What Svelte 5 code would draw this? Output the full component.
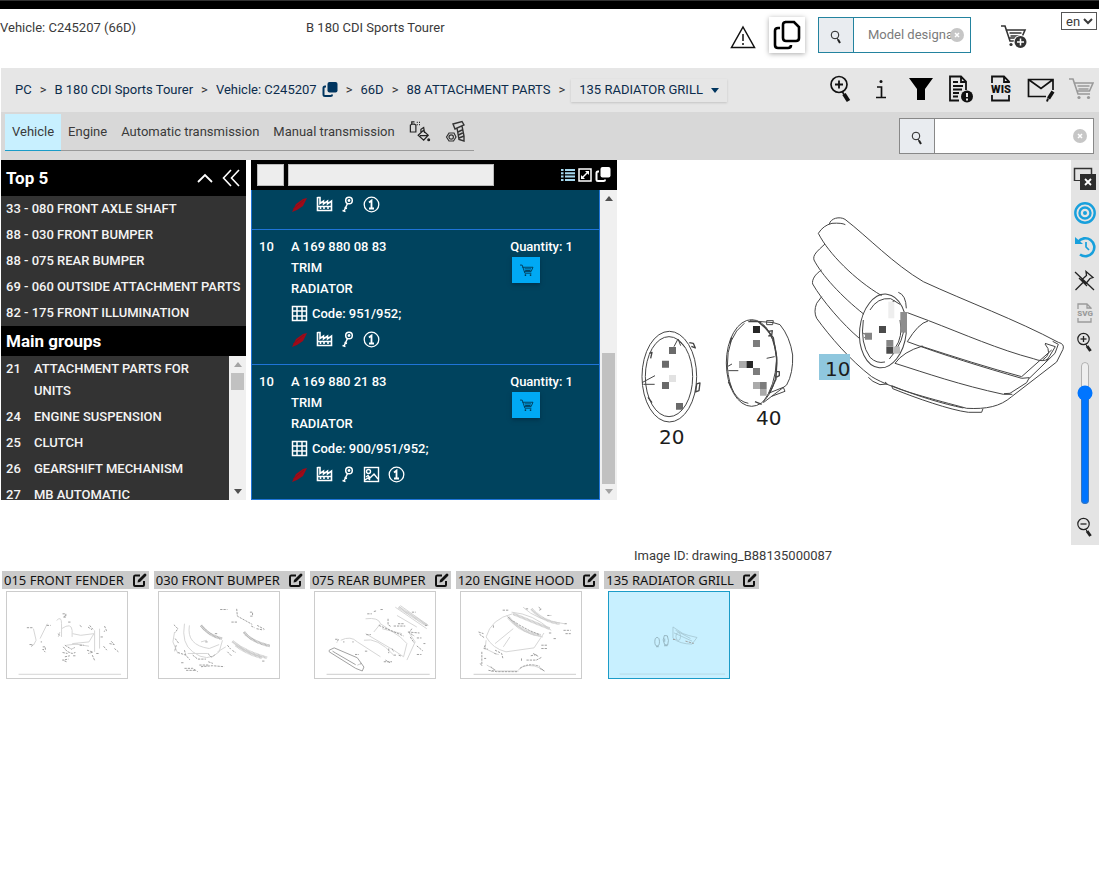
<script>
  let zoomLevel = $state(81);
  let activeTab = $state('Vehicle');
  let language = $state('en');
  let activeThumb = $state('135');

  const crumbsBefore = ['PC', 'B 180 CDI Sports Tourer', 'Vehicle: C245207'];
  const crumbsAfter = ['66D', '88 ATTACHMENT PARTS'];
  const tabs = ['Vehicle', 'Engine', 'Automatic transmission', 'Manual transmission'];
  const navTools = [
    ['zoom', 'Zoom in'],
    ['info', 'Information'],
    ['filter', 'Filter'],
    ['docAlert', 'Document notes'],
    ['wis', 'WIS'],
    ['mail', 'Send message'],
    ['cart', 'Shopping cart']
  ];
  const topFive = [
    '33 - 080 FRONT AXLE SHAFT',
    '88 - 030 FRONT BUMPER',
    '88 - 075 REAR BUMPER',
    '69 - 060 OUTSIDE ATTACHMENT PARTS',
    '82 - 175 FRONT ILLUMINATION'
  ];
  const mainGroups = [
    ['21', 'ATTACHMENT PARTS FOR UNITS'],
    ['24', 'ENGINE SUSPENSION'],
    ['25', 'CLUTCH'],
    ['26', 'GEARSHIFT MECHANISM'],
    ['27', 'MB AUTOMATIC']
  ];
  const parts = [
    { pos: '10', number: 'A 169 880 08 83', code: '951/952;', image: false },
    { pos: '10', number: 'A 169 880 21 83', code: '900/951/952;', image: true }
  ];
  const sideTools = [
    ['closeWindow', 'Close window'],
    ['target', 'Hotspots'],
    ['history', 'History'],
    ['unpin', 'Unpin'],
    ['svg', 'SVG'],
    ['zoomSmall', 'Zoom in']
  ];
  const thumbs = [
    { id: '015', name: 'FRONT FENDER', box: '20 79 363 260' },
    { id: '030', name: 'FRONT BUMPER', box: '473 79 363 260' },
    { id: '075', name: 'REAR BUMPER', box: '37 79 363 260' },
    { id: '120', name: 'ENGINE HOOD', box: '472 79 363 260' },
    { id: '135', name: 'RADIATOR GRILL', box: '313 154 364 260' }
  ];
</script>

{#snippet magnifier()}
  <svg width="12" height="14" viewBox="0 0 12 14" fill="none" stroke="#222">
    <circle cx="5" cy="5" r="3.8" /><path d="M7 8l1 2" /><path d="M8 9.5l2 3.5" stroke-width="2" />
  </svg>
{/snippet}

{#snippet clearMark()}
  <svg width="14" height="14" viewBox="0 0 14 14">
    <circle cx="7" cy="7" r="7" fill="#c6c6c6" /><path d="M5 5l4 4M9 5l-4 4" stroke="#fff" stroke-width="1.5" />
  </svg>
{/snippet}

{#snippet cartShape()}
  <path d="M1 2h4l5 15h12M5.500 6H25l-3.500 8H9M9.500 9h12M10.500 12h10" fill="none" stroke="currentColor" stroke-width="1.600" />
  <circle cx="11" cy="20.500" r="1.600" fill="currentColor" /><circle cx="20.500" cy="20.500" r="1.600" fill="currentColor" />
{/snippet}

{#snippet copyFilled()}
  <svg width="16" height="16" viewBox="0 0 16 16">
    <rect x="5.500" y="0" width="10" height="10.500" rx="2" fill="currentColor" />
    <path d="M4 4.500H3Q1.500 4.500 1.500 6V12.500Q1.500 14 3 14H8.500Q10 14 10 12.500" fill="none" stroke="currentColor" stroke-width="2" />
  </svg>
{/snippet}

{#snippet icon(name)}
  {#if name === 'zoom'}
    <svg width="24" height="28" viewBox="0 0 24 28" fill="none" stroke="#111">
      <circle cx="10" cy="9.500" r="8" stroke-width="1.700" /><path d="M6 9.500h8M10 5.500v8" stroke-width="1.800" />
      <path d="M13.500 17l1.500 2.500" stroke-width="1.500" /><path d="M15 19l4.500 7" stroke-width="4" />
    </svg>
  {:else if name === 'info'}
    <svg width="16" height="24" viewBox="0 0 16 24" fill="none" stroke="#111" stroke-width="1.700">
      <circle cx="8" cy="4.500" r="1.500" fill="#111" stroke="none" /><path d="M4 10h4.500v10M3 20.500h10" />
    </svg>
  {:else if name === 'filter'}
    <svg width="26" height="24" viewBox="0 0 26 24"><path d="M1 1h24l-8 11v11H9V12Z" fill="#000" /></svg>
  {:else if name === 'docAlert'}
    <svg width="26" height="28" viewBox="0 0 26 28" fill="none" stroke="#111" stroke-width="1.800">
      <path d="M11 25.500H2V1.500H13l5 5V15M13 1.500V7h5M5 7h5M5 11h10M5 14.500h9M5 18h6M5 21.500h5" />
      <circle cx="19" cy="21.500" r="6" fill="#111" stroke="none" /><path d="M19 18v4M19 23.500v2" stroke="#fff" />
    </svg>
  {:else if name === 'wis'}
    <svg width="22" height="28" viewBox="0 0 22 28" fill="none" stroke="#111" stroke-width="1.800">
      <path d="M2 8V1.500H14l5 5V8M14 1.500V7h5M2 20v5.500H19V20" />
      <text class="glyph wis" x="11" y="17.500">WIS</text>
    </svg>
  {:else if name === 'mail'}
    <svg width="28" height="26" viewBox="0 0 28 26" fill="none" stroke="#111" stroke-width="1.700">
      <path d="M19 20.500H1.500V3.500H26V14M1.500 3.500l12.500 9L26 3.500" />
      <path d="M21.500 22.500l4.500-7" stroke-width="3.500" /><path d="M20 25.500l1-3" stroke-width="2" />
    </svg>
  {:else if name === 'cart'}
    <svg class="faded" width="26" height="24" viewBox="0 0 26 24">{@render cartShape()}</svg>
  {:else if name === 'spray'}
    <svg width="22" height="24" viewBox="0 0 24 24" fill="none" stroke="#222" stroke-width="1.300">
      <path d="M1.500 4.500l1.500-1h3l1.500 1V12h-6ZM3 3V1h3M8.500 1.500h1M11 1.500h1M8.500 4h1M11 4h1" />
      <path d="M10 15.500l5.500-5 5.500 5-5 5.500ZM13 13V9l3-2 1 6M12 16h8" /><circle cx="21.500" cy="20.500" r="1" fill="#222" />
    </svg>
  {:else if name === 'bolt'}
    <svg width="22" height="24" viewBox="0 0 22 24" fill="none" stroke="#333" stroke-width="1.200">
      <path d="M1.500 17l2.500-4h5l2 4-2.500 4H4Z" /><circle cx="6.200" cy="17" r="2.200" />
      <path d="M8 4l9-2.500 2 3.500-9 4ZM12 8l2 11.500 5 1.500V16L17 6M13 12l4-2M13.500 15l4-2M14 18l5-2" stroke-width="1.400" />
    </svg>
  {:else if name === 'feather'}
    <svg width="17" height="17" viewBox="0 0 17 17"><path d="M1 16L5 8L12 3L16 2L12 10L6 14Z" fill="#a00a18" /><path d="M2 13L13 4" stroke="#83101c" /></svg>
  {:else if name === 'factory'}
    <svg width="17" height="17" viewBox="0 0 17 17" fill="none" stroke="#fff" stroke-width="1.600">
      <path d="M1.500 1v13.500h14V5l-4 3V5L7.500 8V5L4 7.500V1.500H1.500M2 10.500h13M4.500 11v2M8 11v2M12 11v2" />
    </svg>
  {:else if name === 'key'}
    <svg width="14" height="17" viewBox="0 0 14 17" fill="none" stroke="#fff" stroke-width="1.500">
      <circle cx="8" cy="4.500" r="3.300" /><circle cx="8" cy="4.500" r=".7" /><path d="M6.500 7.500L3 15M1.500 14.500l3 1M3.500 11.500l2.500 1" />
    </svg>
  {:else if name === 'picture'}
    <svg width="17" height="17" viewBox="0 0 17 17" fill="none" stroke="#fff" stroke-width="1.400">
      <rect x="1.500" y="1.500" width="14" height="14" /><circle cx="5.500" cy="5.500" r="2" /><path d="M3 11l2-1.500 2 2.500L11 8l4 5M2 14l3-2 2 2" />
    </svg>
  {:else if name === 'one'}
    <svg width="17" height="17" viewBox="0 0 17 17" fill="none" stroke="#fff" stroke-width="1.300">
      <circle cx="8.500" cy="8.500" r="7.300" /><path d="M6 6.500l2.500-2V12M6 12.500h5" stroke-width="1.800" />
    </svg>
  {:else if name === 'closeWindow'}
    <svg width="24" height="24" viewBox="0 0 24 24"><path d="M1.500 14V1.500h17V7" fill="none" stroke="#333" stroke-width="1.500" /><path d="M1 13.500h8" stroke="#333" />
      <rect x="7" y="7" width="16" height="16" fill="#2d2d2d" /><path d="M12 12l6 6M18 12l-6 6" stroke="#fff" stroke-width="1.800" /></svg>
  {:else if name === 'target'}
    <svg width="22" height="22" viewBox="0 0 22 22" fill="none" stroke="#18a0dc" stroke-width="2.400">
      <circle cx="11" cy="11" r="9.700" /><circle cx="11" cy="11" r="5.500" /><circle cx="11" cy="11" r="2" fill="#18a0dc" stroke="none" /></svg>
  {:else if name === 'history'}
    <svg width="23" height="22" viewBox="0 0 23 22" fill="none" stroke="#18a0dc" stroke-width="2.600">
      <path d="M4 6A9 9 0 1 1 6 18.500" /><path d="M1 1v7h8Z" fill="#18a0dc" stroke="none" /><path d="M12 6v5l3 3" stroke-width="1.700" /></svg>
  {:else if name === 'unpin'}
    <svg width="22" height="22" viewBox="0 0 22 22" fill="none" stroke="#222" stroke-width="1.300">
      <path d="M1 2l19 18M1.500 20l8-8M5 8l8 8M12 1.500l7 6-3 1-4 5-4-4 4.500-4Z" /></svg>
  {:else if name === 'svg'}
    <svg width="18" height="20" viewBox="0 0 18 20" fill="none" stroke="#9b9b9b" stroke-width="1.300">
      <path d="M2 6V1h9l4 4v1M11 1v4h4M2 15v4h13v-4" /><text class="glyph svg-word" x="9" y="13">SVG</text></svg>
  {:else}
    <svg width="18" height="20" viewBox="0 0 18 20" fill="none" stroke="#222">
      <circle cx="7.500" cy="7" r="5.700" stroke-width="1.200" /><path d="M4.500 7h6" stroke-width="1.300" />
      {#if name === 'zoomSmall'}<path d="M7.500 4v6" stroke-width="1.300" />{/if}
      <path d="M10 12.500l1 2" /><path d="M11 14l3.500 5" stroke-width="3" />
    </svg>
  {/if}
{/snippet}

{#snippet marks(withPicture)}
  <div class="marks">
    {@render icon('feather')}{@render icon('factory')}{@render icon('key')}
    {#if withPicture}{@render icon('picture')}{/if}
    {@render icon('one')}
  </div>
{/snippet}

{#snippet thumbArt(id)}
  {#if id === '015'}
    <g class="soft"><path d="M100 190l8 35-8 15M120 220l22-45M170 165q15-15 15 10v40M185 190q30-20 32 5v20M218 205l25 5 40-5-15 25-50 5 50 8M285 195v65M300 190v60M180 200l-5 15M200 240l35-4" /></g>
    <g class="mid"><path d="M80 187h20M140 180h12M188 145h10v10h-8l8-5M128 245h8v8h-8l8 8M88 238h10l-5 8M122 230h4M205 170h10M240 180l7 5M265 185l12 8M270 180l10 12M315 182l6 14-8 2M303 215h8M330 235l14 3M335 228l10 10M345 250l12 10M312 243l10 12M262 255l18 6-14 4M290 265h8M278 270l8 18M190 245l12 14 15 6 10-3M195 240l20 12 10-5M188 262l15 3M195 275l15-3M200 290l-12-5 18-3M220 272h10M240 240h12M175 205l6 8" /></g>
    <g class="soft"><path d="M55 328h310" /></g>
  {:else if id === '030'}
    <g class="soft"><path d="M550 175q-10 60 25 85 45 35 80 0l10-35M565 180q-10 60 60 70l30-12M520 200l-5 30 15 35M600 230l18-5M560 265h60M650 260l25-15" /></g>
    <g class="wide"><path d="M600 180q25 32 64 40M730 200q20 28 78 42" /></g>
    <g class="wide faint"><path d="M695 228q35 30 105 50M705 240q30 24 80 38" /></g>
    <g class="mid"><path d="M658 132h22M708 130l2 22 45 25M692 170h20M748 140h8v12h-8M770 180l22 12M768 190l20 4M752 182l10 5M518 178l12 12-8 12M522 220l12 16M525 240l-5 20M530 262l24 8 12 14M550 255l4 15M575 270l15 12h25M595 300h28M600 305l35-3 35 3M622 290l14 5M680 240l10 12M680 260l12 12M695 256l10 6M550 310h25l15 10M555 316h30M785 288h10M540 293h10M642 205h10M613 230h8M622 265q10 20 20 2" /></g>
  {:else if id === '075'}
    <g class="soft"><path d="M190 160q40-5 45 15M215 200l20-25 60 40 20 20-10 40-30-20-85-50M185 225q40-10 90 45M115 225q30-15 50 5l70 45M280 125l95 65M295 120l85 60M285 150l60 35M320 200l20 30-25 55M240 190l60 15" /></g>
    <g class="wide faint"><path d="M290 125l85 55" /></g>
    <g class="line"><path d="M80 255l15-7 70 30 20 28-5 12-20-8-80-50ZM90 258l10 6 60 35" /></g>
    <g class="mid"><path d="M195 145h14M215 138l8-2M235 132h10M258 160v18l8 5M275 182h35M288 175h18M330 140h12M192 208h14M230 180l75 32M98 222h10l-5 10M122 230h4M150 230h4M188 258h8M245 290h25M250 285l14 8M260 250v14M270 250l5 10M275 270h8M290 270l8 3M318 200l35 3M330 190l-8 12 15 10M345 218h14M365 235h6M345 242l18 15M345 268h14M370 180h8M158 268h12M178 295l-12 5M325 215l12 18" /></g>
    <g class="line faint"><path d="M72 328h312" /></g>
  {:else if id === '120'}
    <g class="soft"><path d="M548 215q15-55 80-70M548 215q20 35 60 45l85-12 30-45M575 235l55-45M610 150q50 60 110 65M625 140q65 5 120 55M660 125q40 40 125 50M548 225l-3 25 30 15M645 315q25-25 70-5M600 245l20-30M550 300l30 18h65" /></g>
    <g class="wide faint"><path d="M615 155q35 45 98 55M630 145l110 45M685 130q30 35 85 45" /></g>
    <g class="mid"><path d="M598 134h18M707 125l8 6-8 4M668 130h10M615 155l10 10 10 5 15 10 15 8 15 8 30 12M733 150h12M785 175h10M738 203h10M782 195h22M788 205h16M752 220h10M715 240h18M715 250h18M545 240l-4 10 12 2M535 260v42M530 295l6 8M542 280h6M575 255l20 10 4 16M573 265l12 3M562 305l12 10-10 4M655 280v10M670 285h30l15-8M690 265l18 10M683 272l18-4M710 310l14 8-10-8M525 200l15 5M570 180v8M528 207l14 10M650 310q25-18 60-6M555 316l25 4h65" /></g>
    <g class="line faint"><path d="M510 328h310" /></g>
  {:else}
    <g class="line"><ellipse cx="459" cy="305" rx="7" ry="13" /><path d="M456 320h8M481 286q-8 13 1 28l9 1q5-14-1-28ZM480 317h10M482 295v10" /></g>
    <g class="line faint"><path d="M507 260l30 20 18 6 25 6-15 20q-38 0-58-18ZM515 270l45 25M510 278l55 25" /><ellipse cx="523" cy="289" rx="7" ry="12" /></g>
    <g class="mid"><path d="M507 298h7M545 303l25 7" /></g>
    <g class="soft"><path d="M345 403h320" /></g>
  {/if}
{/snippet}

<div class="page">
  <div class="strip"></div>

  <header class="masthead">
    <span class="vehicle">Vehicle: C245207 (66D)</span>
    <span class="model">B 180 CDI Sports Tourer</span>
    <div class="head-tools">
      <button class="bare" aria-label="Warnings">
        <svg width="26" height="24" viewBox="0 0 26 24" fill="none" stroke="#111" stroke-width="1.500">
          <path d="M13 2L24.500 22.500H1.500Z" /><path d="M13 9v7M13 18v2" />
        </svg>
      </button>
      <button class="raised" aria-label="Copy">
        <svg width="28" height="30" viewBox="0 0 28 30" fill="none" stroke="#000" stroke-width="2.600">
          <path d="M12 2h9l5 5v11q0 3-3 3H13q-3 0-3-3V5q0-3 3-3M7 8H5Q2 8 2 11V25q0 3 3 3H15q3 0 3-3" />
        </svg>
      </button>
      <form class="search blue">
        <button type="button" aria-label="Search model">{@render magnifier()}</button>
        <input type="text" placeholder="Model designation" aria-label="Model designation" />
        <span class="clear">{@render clearMark()}</span>
      </form>
      <button class="bare order" aria-label="Add to cart">
        <svg width="28" height="26" viewBox="0 0 28 26" color="#333">
          {@render cartShape()}
          <circle cx="20.500" cy="18" r="7" fill="#fff" /><circle cx="20.500" cy="18" r="6" fill="#333" /><path d="M17 18h7M20.500 14.500v7" stroke="#fff" stroke-width="1.500" />
        </svg>
      </button>
      <select bind:value={language} aria-label="Language"><option>en</option><option>de</option></select>
    </div>
  </header>

  <nav class="crumb-bar">
    <div class="crumbs">
      {#each crumbsBefore as c, i}
        {#if i > 0}<span>&gt;</span>{/if}<a href="#top">{c}</a>
      {/each}
      <button class="bare copy-vin" aria-label="Copy vehicle number">{@render copyFilled()}</button>
      {#each crumbsAfter as c}
        <span>&gt;</span><a href="#top">{c}</a>
      {/each}
      <span>&gt;</span>
      <button class="drop">135 RADIATOR GRILL <i></i></button>
    </div>
    <div class="nav-tools">
      {#each navTools as [name, label]}
        <button class="bare" aria-label={label}>{@render icon(name)}</button>
      {/each}
    </div>
  </nav>

  <div class="tab-bar">
    <div class="tabs">
      {#each tabs as t}
        <button class:active={t === activeTab} onclick={() => (activeTab = t)}>{t}</button>
      {/each}
      <button aria-label="Paint and fluids">{@render icon('spray')}</button>
      <button aria-label="Standard parts">{@render icon('bolt')}</button>
    </div>
    <form class="search wide-search">
      <button type="button" aria-label="Search">{@render magnifier()}</button>
      <input type="text" aria-label="Search term" />
      <span class="clear">{@render clearMark()}</span>
    </form>
  </div>

  <main>
    <aside>
      <h2 class="tall">Top 5
        <span class="arrows">
          <button class="bare" aria-label="Collapse list"><svg width="16" height="10" viewBox="0 0 16 10" fill="none" stroke="#fff" stroke-width="1.800"><path d="M1 9l7-7 7 7" /></svg></button>
          <button class="bare" aria-label="Hide panel"><svg width="18" height="18" viewBox="0 0 18 18" fill="none" stroke="#fff" stroke-width="1.600"><path d="M9 1L1.500 9 9 17M17 1L9.500 9l7.500 8" /></svg></button>
        </span>
      </h2>
      <ul class="top-five">
        {#each topFive as t}<li><a href="#top">{t}</a></li>{/each}
      </ul>
      <h2>Main groups</h2>
      <div class="scroller groups">
        <ul>
          {#each mainGroups as [n, name]}<li><span>{n}</span><a href="#top">{name}</a></li>{/each}
        </ul>
        <div class="rail"><i class="up dim"></i><b class="short"></b><i class="down"></i></div>
      </div>
    </aside>

    <section class="parts">
      <div class="parts-head">
        <input class="pos-filter" type="text" aria-label="Position filter" />
        <input class="text-filter" type="text" aria-label="Part filter" />
        <div class="parts-tools">
          <button class="bare" aria-label="List view"><svg width="14" height="14" viewBox="0 0 14 14" stroke="#a6d8ee" stroke-width="2"><path d="M0 2h2.500M4 2h10M0 5.300h2.500M4 5.300h10M0 8.600h2.500M4 8.600h10M0 12h2.500M4 12h10" /></svg></button>
          <button class="bare" aria-label="Expand"><svg width="14" height="14" viewBox="0 0 14 14" fill="none" stroke="#fff" stroke-width="1.500"><rect x="1" y="1" width="12" height="12" /><path d="M4 10l6-6" /><path d="M7 3h4v4ZM3 7v4h4Z" fill="#fff" stroke="none" /></svg></button>
          <button class="bare white" aria-label="Copy list">{@render copyFilled()}</button>
        </div>
      </div>
      <div class="scroller list">
        <div class="rows">
          <article class="partial">
            <span></span>
            <div class="detail">{@render marks(false)}</div>
          </article>
          {#each parts as p}
            <article>
              <span>{p.pos}</span>
              <div class="detail">
                <p>{p.number}</p><p>TRIM</p><p>RADIATOR</p>
                <p class="code">
                  <svg width="17" height="17" viewBox="0 0 17 17" fill="none" stroke="#fff" stroke-width="1.500"><path d="M1.500 1.500h14v14h-14ZM1.500 6h14M1.500 11h14M6 1.500v14M11 1.500v14" /></svg>
                  Code: {p.code}
                </p>
                {@render marks(p.image)}
              </div>
              <div class="qty">
                <p>Quantity: 1</p>
                <button aria-label="Add to cart"><svg width="15" height="13" viewBox="0 0 26 24">{@render cartShape()}</svg></button>
              </div>
            </article>
          {/each}
        </div>
        <div class="rail"><i class="up"></i><b class="long"></b><i class="down dim"></i></div>
      </div>
    </section>

    <section class="drawing">
      <svg viewBox="617 160 454 385" role="img" aria-label="Radiator grill drawing">
        <g transform="translate(800 200) scale(.3333)" class="ink">
          <path d="M55 100Q70 76 96 70Q125 68 136 74M88 72C92 55 118 48 135 58C205 112 280 192 370 245C500 305 650 360 775 427Q795 432 789 448L770 486L635 590C600 620 560 628 500 625C410 600 280 570 215 530C150 480 90 410 50 355Q40 335 50 310L65 290" />
          <path d="M55 100C85 160 165 240 245 287M75 132C50 155 38 165 42 180C65 225 125 290 192 343M65 210C45 222 35 240 38 252C65 300 130 375 178 415" />
          <path d="M205 532Q215 545 240 554L262 552L255 546M275 557L278 566C350 595 450 630 505 637L545 637L549 626M275 557C350 588 430 612 490 624" />
          <path d="M322 338L386 362C490 402 600 450 700 476Q730 488 745 476M384 363Q355 370 322 425C430 465 550 502 665 535L688 533L680 548L630 580L612 581M368 438Q310 455 285 490C380 520 480 555 610 583L637 583M362 438C460 470 570 505 665 530L755 450M735 430L766 440L738 486M735 432Q760 460 728 480M758 424L775 433L765 460L688 535" />
          <path d="M295 277Q318 285 319 325" />
          <ellipse cx="249" cy="393" rx="70" ry="111" transform="rotate(6 249 393)" />
          <path d="M210 330Q232 292 272 296L300 313M318 350Q313 430 268 477M190 360Q180 430 210 472Q230 492 255 486M300 360Q310 410 285 445M272 310l12-8M190 400l18 8-15 5" />
        </g>
        <g transform="translate(800 200) scale(.3333)">
          <path d="M237 378h21v21h-21ZM259 440h21v21h-21Z" fill="#4b4b4b" /><path d="M195 398h21v21h-21ZM259 420h21v20h-21Z" fill="#858585" />
          <path d="M301 336h20v62h-20Z" fill="#8d8d8d" /><path d="M280 440h20v21h-20Z" fill="#bbb" /><path d="M265 305h18v50h-18Z" fill="#eee" />
        </g>
        <g transform="translate(620 200) scale(.3333)" class="ink">
          <ellipse cx="148" cy="530" rx="82" ry="136" /><ellipse cx="147" cy="530" rx="71" ry="120" />
          <path d="M66 548L105 527M70 553H104M162 440l12-23 8 20M175 420l20 22" />
          <path d="M208 428l12 2 6 14-12-5M88 460l8-3-4 18M230 552l10-3-3 23-10 4ZM84 592l12 16" stroke-width="4" />
          <ellipse cx="395" cy="489" rx="76" ry="130" /><path d="M373 370Q320 410 322 500Q330 600 385 610M430 375Q465 410 470 480Q465 560 430 605" />
          <path d="M390 362l70 6L480 374Q510 410 518 465Q520 520 500 555L430 608M322 500l14-8M325 512h30M440 475l24-5M445 580l45-18 5 12-40 15M440 362h20l-2 12h-18Z" />
          <path d="M385 365h30l20 18 25 30 10 60-2 65-20 42M330 430l5-18M325 545l10 20M405 605l20 8M443 395l14-3-2 14-10 2M466 515h12v12l-10 5" stroke-width="4" />
        </g>
        <g transform="translate(620 200) scale(.3333)">
          <path d="M147 441h21v21h-21ZM126 482h21v21h-21ZM126 546h21v21h-21ZM168 609h21v20h-21Z" fill="#6a6a6a" /><path d="M147 525h21v21h-21Z" fill="#e2e2e2" />
          <path d="M399 378h21v21h-21ZM379 483h20v21h-20Z" fill="#262626" /><path d="M399 420h21v21h-21ZM399 504h21v21h-21ZM420 546h20v21h-20Z" fill="#7c7c7c" /><path d="M357 483h22v21h-22ZM399 546h21v21h-21ZM420 567h20v20h-20Z" fill="#aaa" />
        </g>
        <rect x="819" y="354" width="31" height="26" fill="#8fc7de" />
        <text x="825" y="376" fill="#123f4c">10</text>
        <text x="659" y="444">20</text>
        <text x="756" y="425">40</text>
      </svg>
      <p>Image ID: drawing_B88135000087</p>
    </section>

    <div class="side">
      {#each sideTools as [name, label]}
        <button class="bare" aria-label={label}>{@render icon(name)}</button>
      {/each}
      <input type="range" min="0" max="100" bind:value={zoomLevel} aria-label="Zoom" />
      <button class="bare" aria-label="Zoom out">{@render icon('zoomOut')}</button>
    </div>
  </main>

  <div class="thumbs">
    {#each thumbs as t}
      <figure class:selected={t.id === activeThumb}>
        <figcaption>
          {t.id} {t.name}
          <button class="bare" aria-label="Edit note"><svg width="14" height="14" viewBox="0 0 14 14" fill="none" stroke="#111" stroke-width="2"><path d="M7 2.500H2Q1 2.500 1 4V12Q1 13 2 13H10Q11 13 11 12V8" /><path d="M4.500 9.500L5 7L11 1Q12 0 13 1Q14 2 13 3L7 9Z" fill="#111" stroke="none" /></svg></button>
        </figcaption>
        <button class="preview" aria-label={t.name} onclick={() => (activeThumb = t.id)}>
          <svg viewBox={t.box}>{@render thumbArt(t.id)}</svg>
        </button>
      </figure>
    {/each}
  </div>
</div>

<style>
  :global(body) { margin: 0; background: #fff; }
  .page { font: 13px/20px Roboto, sans-serif; color: #3a3a3a; }
  button, input, select { font: inherit; color: inherit; margin: 0; box-sizing: border-box; }
  button { padding: 0; border: 0; background: none; cursor: pointer; }
  svg { display: block; flex: none; }
  a { color: inherit; text-decoration: none; }
  h2, p, ul, figure { margin: 0; padding: 0; }
  ul { list-style: none; }
  .bare { display: flex; align-items: center; justify-content: center; }
  .glyph { font-family: Roboto, sans-serif; font-weight: 900; text-anchor: middle; stroke: none; }
  .wis { font-size: 11px; fill: #111; }
  .svg-word { font-size: 8px; fill: #9b9b9b; }

  .strip { height: 9px; background: #000; border-top: 1px solid #333; box-sizing: border-box; }
  .masthead { display: flex; height: 59px; align-items: flex-start; box-sizing: border-box; }
  .vehicle { flex: 0 0 306px; padding-top: 9px; }
  .model { padding-top: 9px; }
  .head-tools { display: flex; margin-left: auto; padding: 3px 2px 0 0; align-items: flex-start; }
  .head-tools > .bare { height: 46px; margin-top: 2px; }
  .raised { display: flex; align-items: center; justify-content: center; width: 36px; height: 36px; margin: 5px 13px 0; box-shadow: 0 1px 5px #aaa; background: #fff; }
  .head-tools > .order { margin: 2px 33px 0 29px; }
  select { height: 18px; width: 36px; border: 1px solid #555; border-radius: 0; background: #fff; padding: 0; }

  .search { display: flex; position: relative; height: 36px; border: 1px solid #888; background: #fff; box-sizing: border-box; }
  .search button { display: flex; flex: 0 0 35px; align-items: center; justify-content: center; padding-top: 4px; background: #e9ecf0; border-right: 1px solid #888; }
  .search input { flex: 1; min-width: 0; border: 0; outline: 0; background: none; padding: 0 14px; }
  .search input::placeholder { color: #7b7b7b; opacity: 1; }
  .search .clear { position: absolute; right: 6px; top: 10px; }
  .blue { width: 153px; margin-top: 5px; border-color: #23839f; }
  .blue button { border-color: #23839f; }

  .crumb-bar { display: flex; height: 44px; margin-left: 1px; background: #e6e6e6; align-items: center; justify-content: space-between; }
  .crumbs { display: flex; align-items: center; gap: 8px; padding-left: 14px; color: #0c2c4c; white-space: nowrap; }
  .crumbs span { color: #333; }
  .copy-vin { color: #00355f; margin-left: -3px; }
  .drop { display: flex; align-items: center; gap: 8px; height: 23px; margin-left: -2px; padding: 0 8px; box-shadow: 0 1px 2px #c4c4c4; }
  .drop i { border: 4px solid transparent; border-top: 5px solid #00355f; border-bottom: 0; }
  .nav-tools { display: flex; }
  .nav-tools .bare { width: 40px; height: 40px; padding: 0 0 2px 4px; }
  .faded { color: #999; }

  .tab-bar { display: flex; height: 48px; margin-left: 1px; background: #d8d8d8; justify-content: space-between; padding: 2px 5px 0 4px; box-sizing: border-box; }
  .tabs { display: flex; height: 37px; border-bottom: 1px solid #999; box-sizing: border-box; }
  .tabs button { display: flex; height: 37px; padding: 0 7px; align-items: center; border-bottom: 1px solid transparent; }
  .tabs .active { background: #c8f0ff; border-color: #1b9cc8; }
  .wide-search { width: 195px; margin-top: 4px; }

  main { display: flex; align-items: flex-start; padding-left: 1px; }
  aside { flex: 0 0 245px; background: #333; color: #f4f4f4; font-weight: 500; }
  h2 { display: flex; justify-content: space-between; align-items: center; height: 30px; padding: 0 6px 0 5px; background: #000; color: #fff; font: bold 17px/30px Roboto, sans-serif; }
  .tall { height: 36px; }
  .arrows { display: flex; gap: 9px; }
  .top-five li { height: 26px; line-height: 26px; padding-left: 5px; white-space: nowrap; }
  .scroller { display: flex; overflow: hidden; }
  .groups { height: 144px; }
  .groups ul { flex: 1; }
  .groups li { display: flex; padding: 2px 30px 2px 5px; line-height: 22px; }
  .groups li span { flex: 0 0 28px; }
  .rail { display: flex; flex-direction: column; align-items: center; justify-content: space-between; flex: 0 0 17px; background: #f0f0f0; padding: 6px 0; box-sizing: border-box; }
  .rail i { border: 4px solid transparent; }
  .rail .up { border-top: 0; border-bottom: 5px solid #505050; }
  .rail .down { border-bottom: 0; border-top: 5px solid #505050; }
  .rail .up.dim { border-bottom-color: #a3a3a3; }
  .rail .down.dim { border-top-color: #a3a3a3; }
  .rail b { width: 13px; background: #c1c1c1; }
  .rail .short { height: 17px; margin: 6px 0 auto; }
  .rail .long { height: 131px; margin: auto 0 5px; }

  .parts { flex: 0 0 366px; margin-left: 5px; font-weight: 500; color: #fff; }
  .parts-head { display: flex; height: 30px; align-items: center; gap: 4px; padding: 0 6px; background: #000; box-sizing: border-box; }
  .parts-head input { height: 22px; border: 1px solid #bbb; background: #ededed; padding: 0 4px; color: #222; }
  .pos-filter { width: 27px; }
  .text-filter { width: 206px; }
  .parts-tools { display: flex; margin-left: auto; gap: 3px; }
  .white { color: #fff; }
  .list { height: 310px; }
  .rows { flex: 1; background: #00435e; border: 1px solid #1f74d8; border-top: 0; box-sizing: border-box; }
  article { display: flex; height: 135px; padding: 6px 26px 0 7px; border-top: 1px solid #1f74d8; box-sizing: border-box; line-height: 21px; }
  .partial { height: 39px; padding-top: 2px; border-top: 0; }
  article > span { flex: 0 0 32px; }
  .detail { flex: 1; }
  .code { display: flex; align-items: center; gap: 4px; height: 28px; }
  .marks { display: flex; gap: 8px; height: 24px; align-items: center; }
  .qty button { display: flex; width: 28px; height: 26px; margin-left: 2px; align-items: center; justify-content: center; background: #00a9f4; color: #00344c; box-shadow: 0 2px 4px #00324a; }

  .drawing { flex: 1; min-width: 0; }
  .drawing svg { width: 100%; }
  .drawing text { font: 20px "DejaVu Sans", sans-serif; fill: #1c1c1c; }
  .ink { fill: none; stroke: #444; stroke-width: 3; stroke-linejoin: round; }
  .drawing p { padding: 1px 0 0 17px; height: 25px; }
  .side { display: flex; flex-direction: column; align-items: center; flex: 0 0 28px; height: 385px; padding-top: 2px; box-sizing: border-box; background: #e4e4e4; }
  .side .bare { width: 28px; height: 34px; }
  .side .bare:nth-of-type(n + 5) { height: 29px; }
  .side input { writing-mode: vertical-lr; direction: rtl; width: 16px; height: 144px; margin: 5px 0 7px; accent-color: #0075ff; }

  .thumbs { display: flex; gap: 5px; padding-left: 2px; font: 13px/18px "Noto Sans", sans-serif; color: #111; }
  figcaption { display: flex; align-items: center; gap: 9px; height: 18px; padding: 0 2px; background: #cacaca; white-space: nowrap; }
  .preview { display: block; width: 122px; margin: 2px 0 0 4px; border: 1px solid #ccc; background: #fff; }
  .preview svg { width: 100%; }
  .selected .preview { border-color: #1b9cc8; background: #c8f0ff; }
  .soft, .mid, .wide, .line { fill: none; stroke: #d6d6d6; stroke-width: 3; }
  .mid { stroke: #a0a0a0; stroke-dasharray: 7 3; }
  .line { stroke: #a0a0a0; }
  .wide { stroke: #b5b5b5; stroke-width: 8; stroke-dasharray: 3 1; }
  .faint { stroke: #ccc; }
  .selected .soft { stroke: #b5dbe6; }
  .selected .line { stroke: #7d9aa3; stroke-width: 2; }
  .selected .faint { stroke: #9cbcc6; }
</style>
